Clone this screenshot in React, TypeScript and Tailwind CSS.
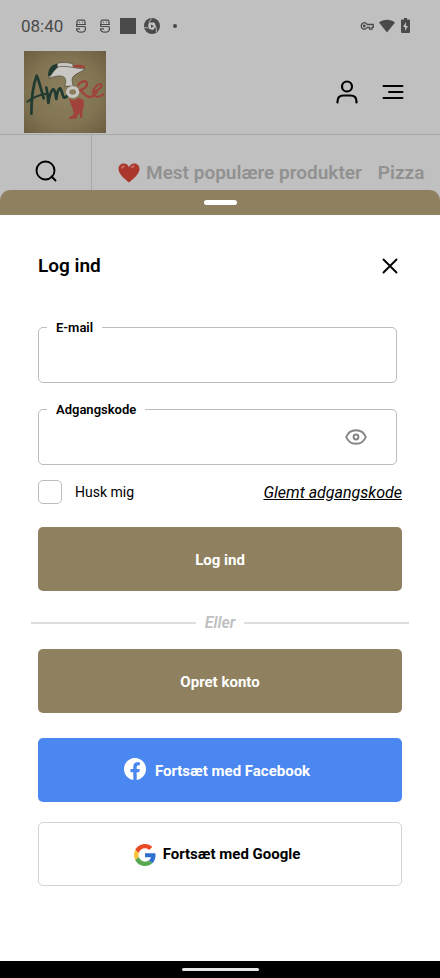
import type { ReactNode } from "react";

const Logo = () => (
  <svg viewBox="0 0 246 246" className="w-full h-full" role="img" aria-label="Amore">
    <defs>
      <radialGradient id="gold" cx="50%" cy="50%" r="70%">
        <stop offset="0%" stopColor="#8b7f5d" />
        <stop offset="60%" stopColor="#807453" />
        <stop offset="100%" stopColor="#6b5f40" />
      </radialGradient>
    </defs>
    <rect width="246" height="246" fill="url(#gold)" />
    {/* lettering */}
    <g fill="none" stroke="#1f3a30" strokeLinecap="round" strokeLinejoin="round">
      <path strokeWidth="8" d="M22 188C22 150 28 100 38 74C44 84 50 112 59 142" />
      <path strokeWidth="6" d="M10 152C28 138 50 130 68 128" />
      <path strokeWidth="8" d="M67 110C71 126 72 142 73 156C76 136 82 118 88 114C94 118 94 130 97 144C99 126 103 114 108 112C113 116 115 130 119 139C123 142 128 138 133 130" />
    </g>
    <g fill="none" stroke="#a0443b" strokeLinecap="round" strokeLinejoin="round">
      <path strokeWidth="7" d="M163 102C170 90 186 86 189 97C190 108 180 114 167 118C178 124 186 138 198 138C208 137 214 130 219 122" />
      <path strokeWidth="6" d="M208 122C222 119 235 108 232 101C226 95 209 108 207 122C207 140 224 142 238 130" />
    </g>
    {/* boot */}
    <path fill="#a0443b" d="M135 143L150 148L165 140L179 147C182 160 178 172 175 180L175 201H169L167 187C162 189 160 195 158 203L133 204C135 197 146 196 149 190C149 174 139 160 135 143Z" />
    {/* hat */}
    <path fill="#1f3a30" d="M72 76C72 56 80 42 98 38L102 47C94 54 88 60 82 72Z" />
    <path fill="#c9c7c3" stroke="#4b4432" strokeWidth="2" d="M100 37C112 33 130 34 146 38L148 49C160 53 172 52 184 54C170 64 153 68 145 80C143 90 146 98 148 105L122 106C126 94 127 84 119 77C105 72 90 76 74 83C82 70 90 58 100 50Z" />
    <path fill="#a0443b" d="M146 43C160 39 172 42 184 44L182 51L148 49Z" />
    <path fill="none" stroke="#4b4432" strokeWidth="2" d="M98 49C114 44 132 46 148 50" />
    <ellipse cx="146" cy="123" rx="15" ry="13" fill="none" stroke="#c9c7c3" strokeWidth="10" />
  </svg>
);

const NotificationS = () => (
  <svg viewBox="0 0 12 14" className="w-3 h-[14px]" fill="none" stroke="#4a4a4a" strokeWidth="1.200">
    <path d="M2 5V2.500L3 1.200H9L10 2.500V5M1 5.500H11M1.700 5.500V7.500H9.500Q10.400 7.500 10.400 8.500V10Q10.400 13.200 6 13.200T1.600 10V9.800H5" />
    <path strokeWidth=".8" d="M4.500 2.800V3.800M7.500 2.800V3.800" />
  </svg>
);

const Shutter = () => (
  <svg viewBox="0 0 16 16" className="w-4 h-4">
    <circle cx="8" cy="8" r="8" fill="#4a4a4a" />
    <path d="M5 4.500L10.500 4.500L12 8.500L9 12L5 11L4 8Z" fill="#c0c0c0" />
    <path d="M5 4.500L7.500 .5M12 8.500L12.500 14M4 10L.5 9.500" stroke="#c0c0c0" strokeWidth=".9" />
    <path d="M7 6.500L10 8.300L7 9.800Z" fill="#4a4a4a" />
  </svg>
);

const StatusBar = () => (
  <div className="flex items-center justify-between h-[51px] pl-[21px] pr-[30px] text-[#4a4a4a]">
    <div className="flex items-center">
      <span className="text-[17px] leading-5 w-[54px]">08:40</span>
      <NotificationS />
      <span className="w-3" />
      <NotificationS />
      <span className="w-4 h-4 ml-[9px] bg-[#4a4a4a]" />
      <span className="w-2" />
      <Shutter />
      <span className="w-1 h-1 ml-[13px] rounded-full bg-[#4a4a4a]" />
    </div>
    <div className="flex items-center gap-[5px]">
      <svg viewBox="0 0 14 8" className="w-[14px] h-2" fill="none" stroke="#4a4a4a" strokeWidth="1.300">
        <path d="M7.300 2.500H13.300V5.300H12V7.200H9.500V5.300H7.300A3.200 3.200 0 1 1 7.300 2.500Z" />
        <circle cx="4.300" cy="4" r=".8" />
      </svg>
      <svg viewBox="0 0 16 14" className="w-4 h-[14px]" fill="#4a4a4a">
        <path d="M8 13.500L0 3.500C4.500-.3 11.500-.3 16 3.500Z" />
      </svg>
      <svg viewBox="0 0 9 15" className="w-[9px] h-[15px] ml-[1px]">
        <path fill="#4a4a4a" d="M3 0H6V1.500H8Q9 1.500 9 2.500V14Q9 15 8 15H1Q0 15 0 14V2.500Q0 1.500 1 1.500H3Z" />
        <path fill="#c0c0c0" d="M5 4L2 9H4V13L7 8H5Z" />
      </svg>
    </div>
  </div>
);

const Heart = () => (
  <svg viewBox="0 0 22 20" className="w-[22px] h-5 shrink-0">
    <path fill="#ab372c" d="M11 19.500C6 15.500 .5 11 .5 5.800C.5 2.500 3 .5 5.800 .5C8.300 .5 10.200 2 11 4.200C11.800 2 13.700 .5 16.200 .5C19 .5 21.500 2.500 21.500 5.800C21.500 11 16 15.500 11 19.500Z" />
    <ellipse cx="4.800" cy="4" rx="2" ry="1.300" fill="#c4695f" transform="rotate(-35 4.800 4)" />
    <ellipse cx="14.800" cy="3.600" rx="2" ry="1.200" fill="#c4695f" transform="rotate(-25 14.800 3.600)" />
  </svg>
);

const FacebookIcon = () => (
  <svg viewBox="0 0 24 24" className="w-[22px] h-[22px] mb-1" fill="#fff">
    <path d="M24 12.073C24 5.400 18.627 0 12 0S0 5.400 0 12.073C0 18.100 4.388 23.090 10.125 24V15.563H7.078V12.073H10.125V9.413C10.125 6.387 11.917 4.716 14.658 4.716C15.970 4.716 17.344 4.952 17.344 4.952V7.922H15.830C14.340 7.922 13.875 8.853 13.875 9.808V12.073H17.203L16.671 15.563H13.875V24C19.612 23.090 24 18.100 24 12.073Z" />
  </svg>
);

const GoogleIcon = () => (
  <svg viewBox="0 0 48 48" className="w-[22px] h-[22px]">
    <path fill="#ea4b25" d="M24 9.500c3.540 0 6.710 1.220 9.210 3.600l6.850-6.850C35.900 2.380 30.470 0 24 0 14.620 0 6.510 5.380 2.560 13.220l7.980 6.190C12.430 13.720 17.740 9.500 24 9.500z" />
    <path fill="#2f6fd0" d="M46.980 24.550c0-1.570-.15-3.090-.38-4.550H24v9.020h12.940c-.58 2.960-2.260 5.480-4.780 7.180l7.730 6c4.510-4.180 7.090-10.360 7.090-17.650z" />
    <path fill="#fbc33a" d="M10.530 28.590c-.48-1.450-.76-2.990-.76-4.590s.27-3.140.76-4.590l-7.980-6.190C.92 16.460 0 20.120 0 24c0 3.880.92 7.540 2.560 10.780l7.970-6.190z" />
    <path fill="#5aa851" d="M24 48c6.480 0 11.930-2.130 15.890-5.810l-7.730-6c-2.150 1.450-4.920 2.300-8.160 2.300-6.260 0-11.570-4.220-13.470-9.910l-7.980 6.190C6.510 42.620 14.620 48 24 48z" />
  </svg>
);

type FieldProps = { id: string; label: string; type: string; children?: ReactNode };

const Field = ({ id, label, type, children }: FieldProps) => (
  <fieldset className="mr-[5px] pl-2 border border-[#bdbdbd] rounded-[5px]">
    <legend className="px-[9px] pt-[2px] text-[13px] leading-4 font-semibold text-black">
      <label htmlFor={id}>{label}</label>
    </legend>
    <div className="flex items-center h-[46px] pr-[29px] pb-2">
      <input id={id} type={type} className="flex-1 min-w-0 h-9 px-2 text-base outline-none bg-transparent" />
      {children}
    </div>
  </fieldset>
);

const App = () => {
  return (
    <div className="min-h-screen flex flex-col bg-[#c0c0c0] font-['Roboto',sans-serif] text-black">
      <StatusBar />

      <header className="flex items-center justify-between pl-6 pr-9 pb-[1px] border-b border-[#a8a8a8]">
        <a href="#" className="block w-[82px] h-[82px]">
          <Logo />
        </a>
        <div className="flex items-center gap-6">
          <button type="button" aria-label="Profil">
            <svg viewBox="0 0 22 24" className="w-[22px] h-6" fill="none" stroke="#000" strokeWidth="2.200" strokeLinecap="round">
              <circle cx="11" cy="6.500" r="5" />
              <path d="M1.500 22.500V21.500C1.500 17.500 4 15.500 7.500 15.500H14.500C18 15.500 20.500 17.500 20.500 21.500V22.500" />
            </svg>
          </button>
          <button type="button" aria-label="Menu">
            <svg viewBox="0 0 22 16" className="w-[22px] h-4" fill="none" stroke="#000" strokeWidth="2" strokeLinecap="round">
              <path d="M1.500 2H20.500M7 8H20.500M1.500 14H20.500" />
            </svg>
          </button>
        </div>
      </header>

      <nav className="flex h-[55px] overflow-hidden">
        <div className="w-[92px] shrink-0 flex justify-center pt-[25px] border-r border-[#a8a8a8]">
          <button type="button" aria-label="Søg" className="h-[22px]">
            <svg viewBox="0 0 22 22" className="w-[22px] h-[22px]" fill="none" stroke="#000" strokeWidth="1.900" strokeLinecap="round">
              <circle cx="10.500" cy="10.500" r="9" />
              <path d="M16.500 16.500L20.500 20.500" />
            </svg>
          </button>
        </div>
        <div className="flex items-center h-6 mt-[26px] pl-[26px] text-[19px] font-semibold whitespace-nowrap text-[#919191]">
          <Heart />
          <a href="#" className="ml-[6px]">Mest populære produkter</a>
          <a href="#" className="ml-4">Pizza</a>
        </div>
      </nav>

      {/* login sheet */}
      <div className="flex justify-center h-[25px] pt-[10px] rounded-t-[10px] bg-[#8f8160]">
        <span className="w-[33px] h-[5px] rounded-full bg-white" />
      </div>
      <main className="flex-1 px-[31px] pb-10 bg-white">
        <div className="flex items-center justify-between pt-[35px] pl-[7px] pr-[11px]">
          <h1 className="text-[19px] leading-8 font-semibold">Log ind</h1>
          <button type="button" aria-label="Luk">
            <svg viewBox="0 0 16 16" className="w-4 h-4" fill="none" stroke="#000" strokeWidth="1.900" strokeLinecap="round">
              <path d="M1.500 1.500L14.500 14.500M14.500 1.500L1.500 14.500" />
            </svg>
          </button>
        </div>

        <form className="px-[7px] pt-9" onSubmit={(e) => e.preventDefault()}>
          <Field id="email" label="E-mail" type="email" />
          <div className="h-[17px]" />
          <Field id="password" label="Adgangskode" type="password">
            <button type="button" aria-label="Vis adgangskode">
              <svg viewBox="0 0 22 16" className="w-[22px] h-4" fill="none" stroke="#858585" strokeWidth="2">
                <path d="M1.200 8C3 3.500 6.500 1.200 11 1.200S19 3.500 20.800 8C19 12.500 15.500 14.800 11 14.800S3 12.500 1.200 8Z" />
                <circle cx="11" cy="8" r="2.400" />
              </svg>
            </button>
          </Field>
          <div className="flex items-center justify-between h-6 mt-[15px]">
            <label className="flex items-center gap-[13px] text-sm">
              <input type="checkbox" className="appearance-none w-6 h-6 border border-[#bdbdbd] rounded-[5px] checked:bg-[#8f8160]" />
              Husk mig
            </label>
            <a href="#" className="pt-[2px] text-base italic underline">Glemt adgangskode</a>
          </div>
          <button type="submit" className="w-full h-16 mt-[23px] pt-[2px] rounded-[5px] bg-[#8f8160] text-white text-[15px] font-bold">
            Log ind
          </button>
        </form>

        <div className="flex items-center gap-[9px] h-[58px] pt-[5px]">
          <span className="flex-1 h-[2px] bg-[#dedede]" />
          <span className="text-base italic font-semibold text-[#c0c0c0]">Eller</span>
          <span className="flex-1 h-[2px] bg-[#dedede]" />
        </div>

        <div className="flex flex-col px-[7px] text-[15px] font-bold">
          <button type="button" className="h-16 pt-[2px] rounded-[5px] bg-[#8f8160] text-white">
            Opret konto
          </button>
          <button type="button" className="flex items-center justify-center gap-[9px] h-16 mt-[25px] pt-[2px] pr-[6px] rounded-[5px] bg-[#4b87f1] text-white">
            <FacebookIcon />
            Fortsæt med Facebook
          </button>
          <button type="button" className="flex items-center justify-center gap-[7px] h-16 mt-5 pt-[1px] pr-[6px] rounded-[5px] border border-[#d4d4d4]">
            <GoogleIcon />
            Fortsæt med Google
          </button>
        </div>
      </main>

      <footer className="flex items-center justify-center h-[17px] bg-black">
        <span className="w-[77px] h-[3px] rounded-full bg-[#e8e8e8]" />
      </footer>
    </div>
  );
};

export default App;
